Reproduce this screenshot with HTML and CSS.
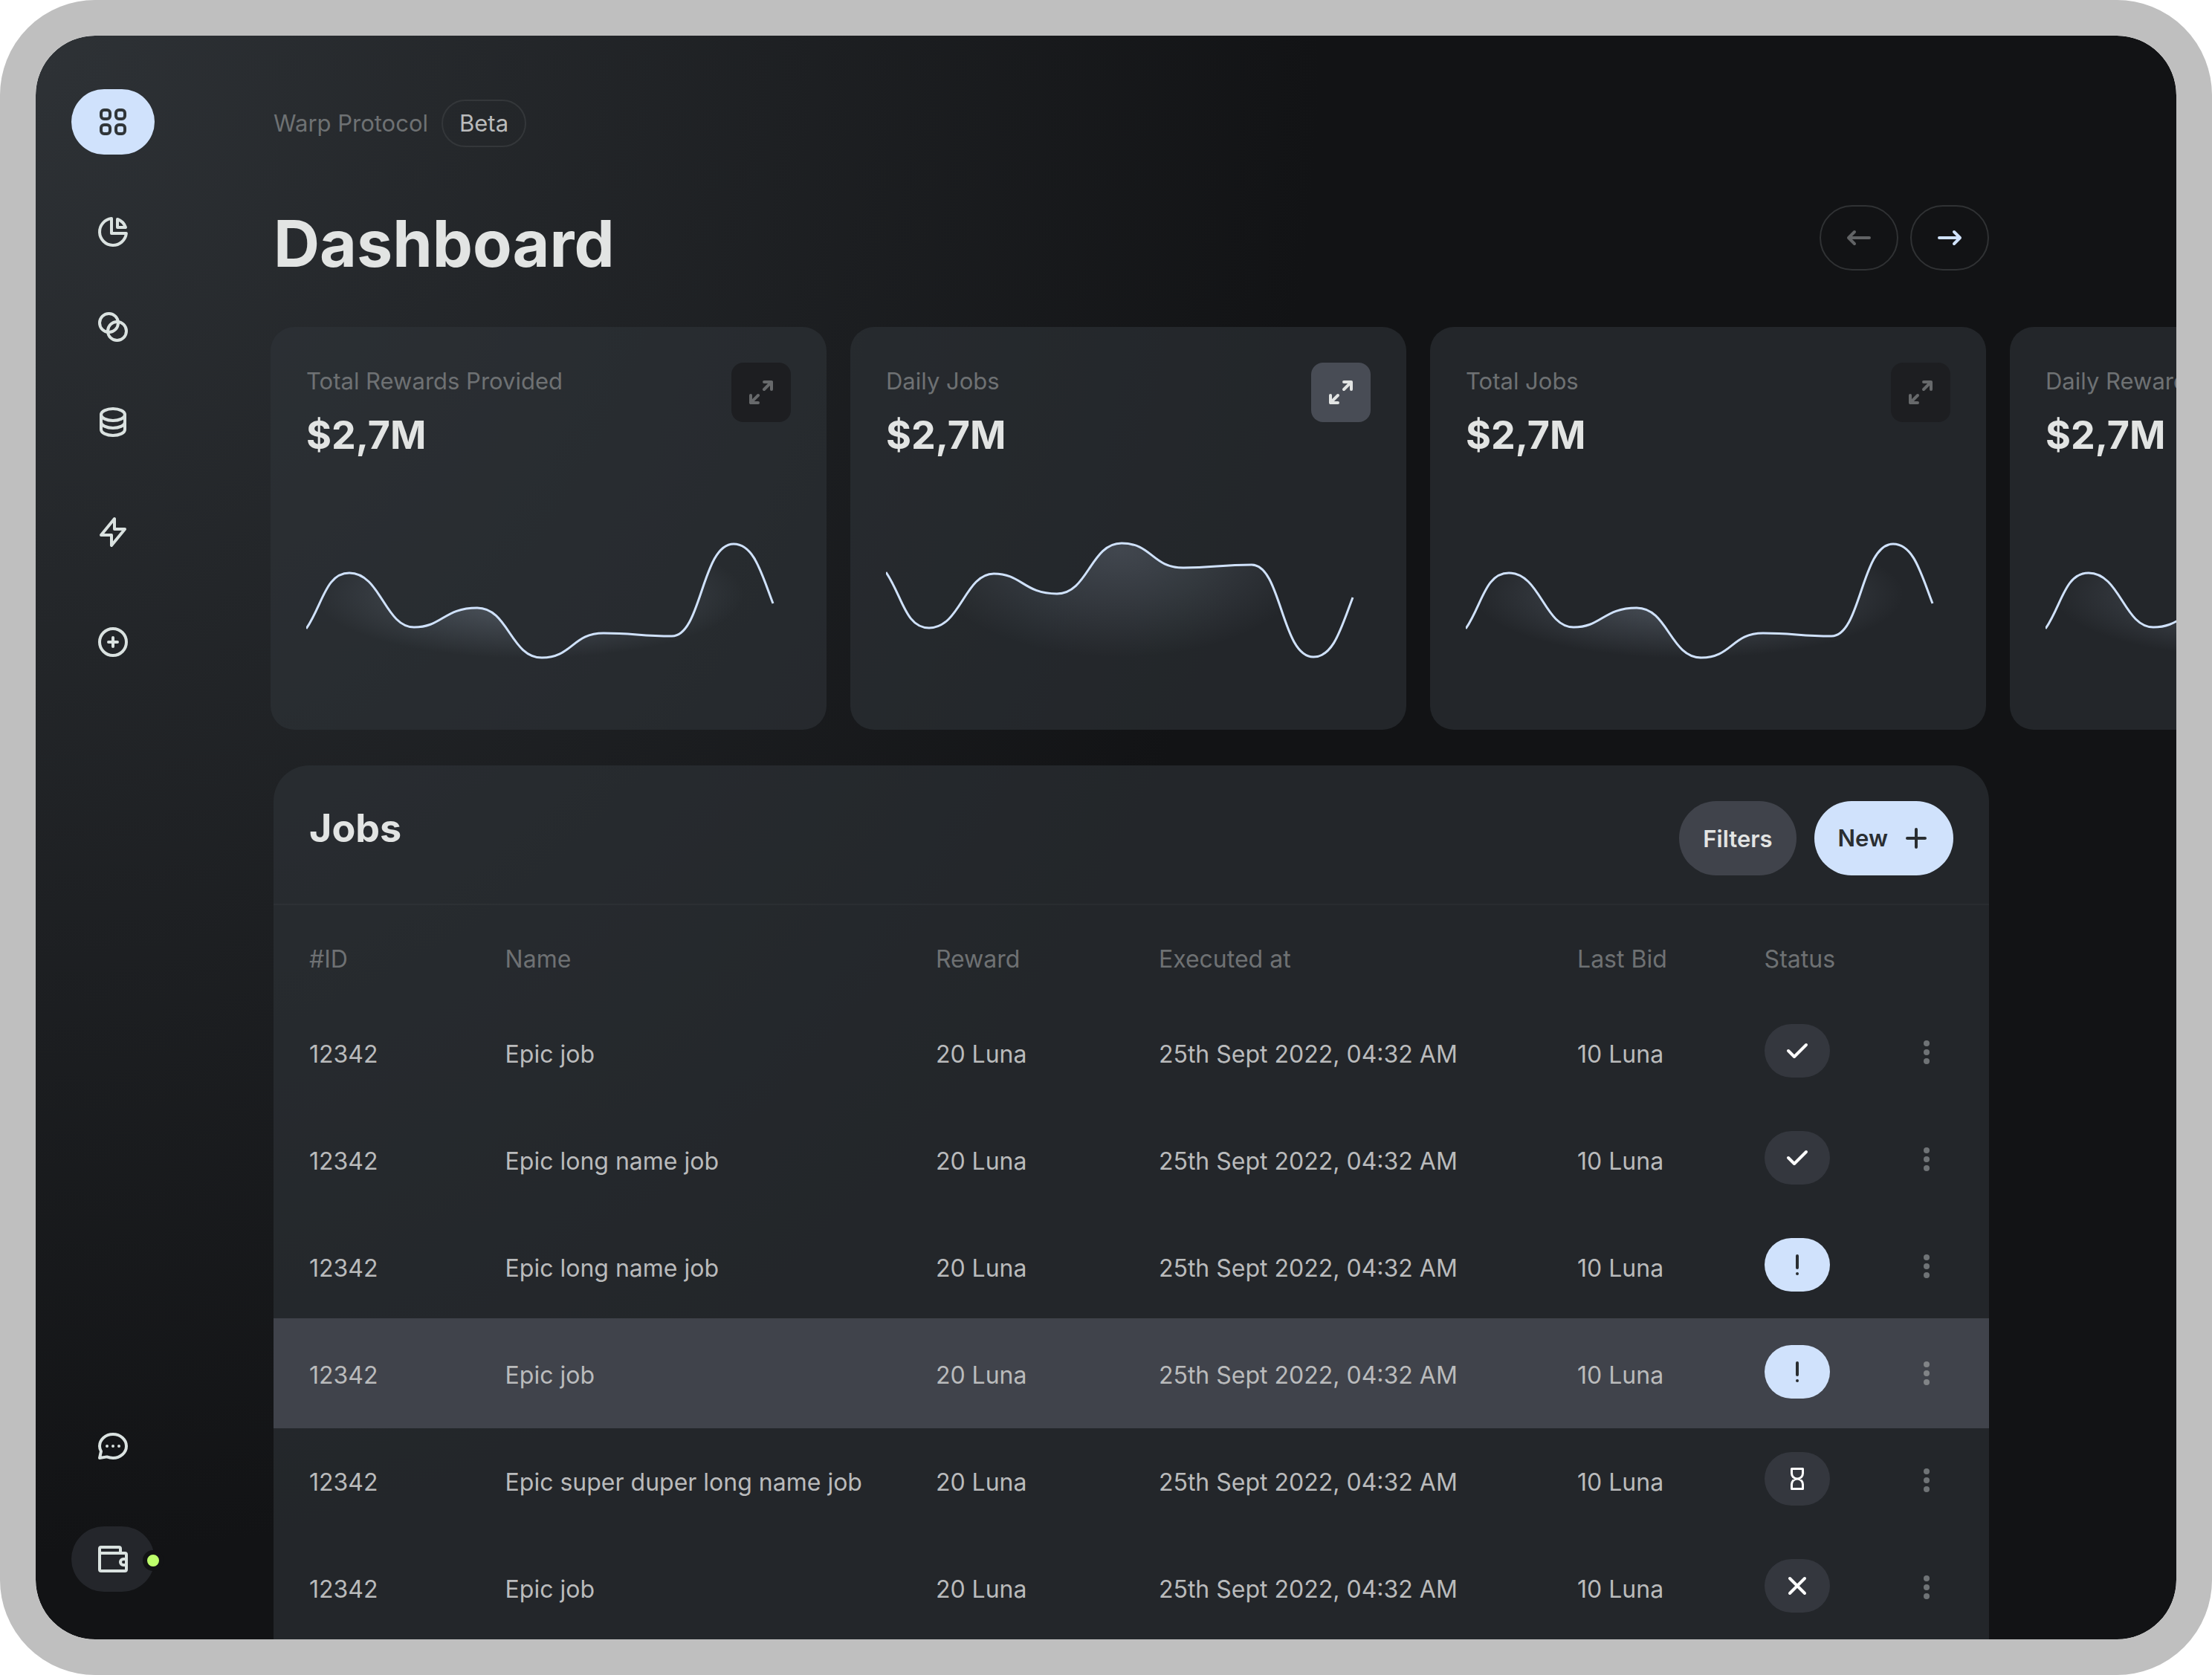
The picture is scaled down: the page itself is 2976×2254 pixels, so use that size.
FILE: index.html
```
<!DOCTYPE html>
<html lang="en">
<head>
<meta charset="utf-8">
<title>Warp Protocol – Dashboard</title>
<meta name="viewport" content="width=device-width, initial-scale=1">
<link rel="stylesheet" href="styles.css">
</head>
<body>
<svg class="sprite" aria-hidden="true">
  <defs>
    <radialGradient id="glow-rise" gradientUnits="userSpaceOnUse" cx="0" cy="0" r="1" gradientTransform="translate(300 80) scale(290 86)">
      <stop offset="0" stop-color="#d0e2fc" stop-opacity=".26"/>
      <stop offset="1" stop-color="#d0e2fc" stop-opacity="0"/>
    </radialGradient>
    <radialGradient id="glow-fall" gradientUnits="userSpaceOnUse" cx="0" cy="0" r="1" gradientTransform="translate(314 20) scale(270 145)">
      <stop offset="0" stop-color="#d0e2fc" stop-opacity=".17"/>
      <stop offset=".5" stop-color="#d0e2fc" stop-opacity=".09"/>
      <stop offset="1" stop-color="#d0e2fc" stop-opacity="0"/>
    </radialGradient>
    <symbol id="i-grid" viewBox="0 0 24 24"><rect x="4" y="4" width="6" height="6" rx="2"/><rect x="14" y="4" width="6" height="6" rx="2"/><rect x="4" y="14" width="6" height="6" rx="2"/><rect x="14" y="14" width="6" height="6" rx="2"/></symbol>
    <symbol id="i-pie" viewBox="0 0 24 24"><path d="M11 3.05A9 9 0 1 0 20.95 13H11z"/><path d="M15 3.5A9 9 0 0 1 20.5 9H15z"/></symbol>
    <symbol id="i-rings" viewBox="0 0 24 24"><circle cx="9.25" cy="9.25" r="6.25"/><circle cx="14.75" cy="14.75" r="6.25"/></symbol>
    <symbol id="i-data" viewBox="0 0 24 24"><ellipse cx="12" cy="7" rx="8" ry="4"/><path d="M4 7v10c0 2.2 3.6 4 8 4s8-1.8 8-4V7M4 12c0 2.2 3.6 4 8 4s8-1.8 8-4"/></symbol>
    <symbol id="i-bolt" viewBox="0 0 24 24"><path d="M13 3v7h7L11 21v-7H4z"/></symbol>
    <symbol id="i-add" viewBox="0 0 24 24"><circle cx="12" cy="12" r="9"/><path d="M12 9v6M9 12h6"/></symbol>
    <symbol id="i-chat" viewBox="0 0 24 24"><path d="M3 20l1-4.5C3.4 14.5 3 13.3 3 12c0-4.4 4-8 9-8s9 3.6 9 8-4 8-9 8c-1.5 0-2.8-.3-4.1-.8z"/><path d="M8 12h.01M12 12h.01M16 12h.01"/></symbol>
    <symbol id="i-wallet" viewBox="0 0 24 24"><path d="M3 8V5a1 1 0 0 1 1-1h12a1 1 0 0 1 1 1v3M3 8h17a1 1 0 0 1 1 1v10a1 1 0 0 1-1 1H4a1 1 0 0 1-1-1zM21 12h-2a2 2 0 0 0 0 4h2"/></symbol>
    <symbol id="i-left" viewBox="0 0 24 24"><path d="M19 12H5M9 8l-4 4 4 4"/></symbol>
    <symbol id="i-right" viewBox="0 0 24 24"><path d="M5 12h14M15 8l4 4-4 4"/></symbol>
    <symbol id="i-expand" viewBox="0 0 24 24"><path d="M14 5h5v5M19 5l-5 5M10 19H5v-5M5 19l5-5"/></symbol>
    <symbol id="i-plus" viewBox="0 0 24 24"><path d="M12 6v12M6 12h12"/></symbol>
    <symbol id="i-check" viewBox="0 0 24 24"><path d="M6 12l4 4 8-8"/></symbol>
    <symbol id="i-alert" viewBox="0 0 24 24"><path d="M12 6v8M12 18h.01"/></symbol>
    <symbol id="i-wait" viewBox="0 0 24 24"><path stroke-width="1.5" d="M8.25 5.25h7.5v3c0 2-1.5 3.75-3.75 3.75s-3.75-1.75-3.75-3.75zM12 12c2.25 0 3.75 1.75 3.75 3.75v3h-7.5v-3c0-2 1.5-3.75 3.75-3.75z"/></symbol>
    <symbol id="i-cross" viewBox="0 0 24 24"><path d="M7 7l10 10M17 7L7 17"/></symbol>
    <symbol id="i-more" viewBox="0 0 24 24"><g fill="currentColor" stroke="none"><circle cx="12" cy="7" r="2"/><circle cx="12" cy="13" r="2"/><circle cx="12" cy="19" r="2"/></g></symbol>
    <symbol id="c-rise" viewBox="0 0 652 176">
      <path fill="url(#glow-rise)" d="M0 126C22 94 26 51 58 51C100 51 106 124 145 124C183 124 185 98 230 98C272 98 275 165 317 165C358 165 358 132 400 132C440 132 450 136 492 136C532 136 532 12 575 12C602 12 612 50 628 92V176H0z"/>
      <path d="M0 126C22 94 26 51 58 51C100 51 106 124 145 124C183 124 185 98 230 98C272 98 275 165 317 165C358 165 358 132 400 132C440 132 450 136 492 136C532 136 532 12 575 12C602 12 612 50 628 92" fill="none" stroke="#d0e2fc" stroke-width="3"/>
    </symbol>
    <symbol id="c-fall" viewBox="0 0 652 176">
      <path fill="url(#glow-fall)" d="M0 50C22 82 26 125 58 125C100 125 106 52 145 52C183 52 185 79 230 79C272 79 275 11 317 11C358 11 358 44 400 44C440 44 450 40 492 40C532 40 532 164 575 164C602 164 612 126 628 84V176H0z"/>
      <path d="M0 50C22 82 26 125 58 125C100 125 106 52 145 52C183 52 185 79 230 79C272 79 275 11 317 11C358 11 358 44 400 44C440 44 450 40 492 40C532 40 532 164 575 164C602 164 612 126 628 84" fill="none" stroke="#d0e2fc" stroke-width="3"/>
    </symbol>
  </defs>
</svg>

<div class="app">
  <aside class="sidebar">
    <nav class="nav" aria-label="Main">
      <a class="nav-item nav-item-active" href="#dashboard" aria-label="Dashboard"><svg class="icon"><use href="#i-grid"/></svg></a>
      <div class="nav-group">
        <a class="nav-item" href="#stats" aria-label="Statistics"><svg class="icon"><use href="#i-pie"/></svg></a>
        <a class="nav-item" href="#pairs" aria-label="Pairs"><svg class="icon"><use href="#i-rings"/></svg></a>
        <a class="nav-item" href="#balances" aria-label="Balances"><svg class="icon"><use href="#i-data"/></svg></a>
      </div>
      <a class="nav-item" href="#jobs" aria-label="Jobs"><svg class="icon"><use href="#i-bolt"/></svg></a>
      <a class="nav-item" href="#new" aria-label="Create"><svg class="icon"><use href="#i-add"/></svg></a>
    </nav>
    <div class="nav-bottom">
      <a class="nav-item" href="#support" aria-label="Support"><svg class="icon"><use href="#i-chat"/></svg></a>
      <a class="nav-item nav-item-wallet" href="#wallet" aria-label="Wallet, connected"><svg class="icon"><use href="#i-wallet"/></svg><span class="online"></span></a>
    </div>
  </aside>

  <main class="main">
    <div class="crumb"><span>Warp Protocol</span><span class="tag">Beta</span></div>
    <header class="title-row">
      <h1 class="title">Dashboard</h1>
      <div class="pager">
        <button class="pager-btn pager-btn-off" type="button" aria-label="Previous"><svg class="icon"><use href="#i-left"/></svg></button>
        <button class="pager-btn" type="button" aria-label="Next"><svg class="icon"><use href="#i-right"/></svg></button>
      </div>
    </header>

    <section class="cards" aria-label="Key figures">
      <article class="card">
        <div class="card-head"><div><h2 class="card-label">Total Rewards Provided</h2><p class="card-value">$2,7M</p></div>
          <button class="expand" type="button" aria-label="Expand"><svg class="icon"><use href="#i-expand"/></svg></button></div>
        <svg class="chart" viewBox="0 0 652 176"><use href="#c-rise"/></svg>
      </article>
      <article class="card">
        <div class="card-head"><div><h2 class="card-label">Daily Jobs</h2><p class="card-value">$2,7M</p></div>
          <button class="expand expand-active" type="button" aria-label="Expand"><svg class="icon"><use href="#i-expand"/></svg></button></div>
        <svg class="chart" viewBox="0 0 652 176"><use href="#c-fall"/></svg>
      </article>
      <article class="card">
        <div class="card-head"><div><h2 class="card-label">Total Jobs</h2><p class="card-value">$2,7M</p></div>
          <button class="expand" type="button" aria-label="Expand"><svg class="icon"><use href="#i-expand"/></svg></button></div>
        <svg class="chart" viewBox="0 0 652 176"><use href="#c-rise"/></svg>
      </article>
      <article class="card">
        <div class="card-head"><div><h2 class="card-label">Daily Rewards</h2><p class="card-value">$2,7M</p></div>
          <button class="expand" type="button" aria-label="Expand"><svg class="icon"><use href="#i-expand"/></svg></button></div>
        <svg class="chart" viewBox="0 0 652 176"><use href="#c-rise"/></svg>
      </article>
    </section>

    <section class="panel">
      <header class="panel-head">
        <h2 class="panel-title">Jobs</h2>
        <div class="actions">
          <button class="btn" type="button">Filters</button>
          <button class="btn btn-primary" type="button">New<svg class="icon"><use href="#i-plus"/></svg></button>
        </div>
      </header>
      <table class="jobs">
        <colgroup><col class="col-id"><col class="col-name"><col class="col-reward"><col class="col-time"><col class="col-bid"><col class="col-status"><col class="col-more"></colgroup>
        <thead>
          <tr><th>#ID</th><th>Name</th><th>Reward</th><th>Executed at</th><th>Last Bid</th><th>Status</th><th></th></tr>
        </thead>
        <tbody>
          <tr><td>12342</td><td>Epic job</td><td>20 Luna</td><td>25th Sept 2022, 04:32 AM</td><td>10 Luna</td><td class="cell-icon"><span class="status" role="img" aria-label="Done"><svg class="icon"><use href="#i-check"/></svg></span></td><td class="cell-icon"><button class="more" type="button" aria-label="More"><svg class="icon"><use href="#i-more"/></svg></button></td></tr>
          <tr><td>12342</td><td>Epic long name job</td><td>20 Luna</td><td>25th Sept 2022, 04:32 AM</td><td>10 Luna</td><td class="cell-icon"><span class="status" role="img" aria-label="Done"><svg class="icon"><use href="#i-check"/></svg></span></td><td class="cell-icon"><button class="more" type="button" aria-label="More"><svg class="icon"><use href="#i-more"/></svg></button></td></tr>
          <tr><td>12342</td><td>Epic long name job</td><td>20 Luna</td><td>25th Sept 2022, 04:32 AM</td><td>10 Luna</td><td class="cell-icon"><span class="status status-alert" role="img" aria-label="Attention"><svg class="icon"><use href="#i-alert"/></svg></span></td><td class="cell-icon"><button class="more" type="button" aria-label="More"><svg class="icon"><use href="#i-more"/></svg></button></td></tr>
          <tr class="row-active"><td>12342</td><td>Epic job</td><td>20 Luna</td><td>25th Sept 2022, 04:32 AM</td><td>10 Luna</td><td class="cell-icon"><span class="status status-alert" role="img" aria-label="Attention"><svg class="icon"><use href="#i-alert"/></svg></span></td><td class="cell-icon"><button class="more" type="button" aria-label="More"><svg class="icon"><use href="#i-more"/></svg></button></td></tr>
          <tr><td>12342</td><td>Epic super duper long name job</td><td>20 Luna</td><td>25th Sept 2022, 04:32 AM</td><td>10 Luna</td><td class="cell-icon"><span class="status" role="img" aria-label="Pending"><svg class="icon"><use href="#i-wait"/></svg></span></td><td class="cell-icon"><button class="more" type="button" aria-label="More"><svg class="icon"><use href="#i-more"/></svg></button></td></tr>
          <tr><td>12342</td><td>Epic job</td><td>20 Luna</td><td>25th Sept 2022, 04:32 AM</td><td>10 Luna</td><td class="cell-icon"><span class="status" role="img" aria-label="Failed"><svg class="icon"><use href="#i-cross"/></svg></span></td><td class="cell-icon"><button class="more" type="button" aria-label="More"><svg class="icon"><use href="#i-more"/></svg></button></td></tr>
        </tbody>
      </table>
    </section>
  </main>
</div>
</body>
</html>
```
FILE: styles.css
```
:root {
  --ice: #d0e2fc;
  --ink: #2a2e31;
  --text: #e2e4e3;
  --text-soft: #babbbc;
  --text-dim: #6e7173;
  --surface: rgba(46, 51, 56, .6);
}

* { box-sizing: border-box; }

body {
  margin: 0;
  background: #fff;
  color: var(--text);
  font: 400 32px/48px Inter, "Liberation Sans", sans-serif;
}

h1, h2, p { margin: 0; }

button {
  padding: 0;
  border: 0;
  background: none;
  color: inherit;
  font: inherit;
  cursor: pointer;
}

.sprite { position: absolute; width: 0; height: 0; }

.icon {
  display: block;
  flex: none;
  width: 48px;
  height: 48px;
  fill: none;
  stroke: currentColor;
  stroke-width: 2;
  stroke-linecap: round;
  stroke-linejoin: round;
}

.app {
  display: flex;
  gap: 160px;
  min-height: 100vh;
  overflow: hidden;
  border: 48px solid #bfbfbf;
  border-radius: 128px;
  background: radial-gradient(60% 95% at 0 0, #2e3236, #121315) padding-box;
}

/* Sidebar */

.sidebar {
  display: flex;
  flex: none;
  flex-direction: column;
  justify-content: space-between;
  padding: 72px 0 64px 48px;
}

.nav { display: flex; flex-direction: column; gap: 60px; }
.nav-group { display: flex; flex-direction: column; gap: 40px; }
.nav-bottom { display: flex; flex-direction: column; gap: 64px; }

.nav-item {
  position: relative;
  display: flex;
  align-items: center;
  justify-content: center;
  width: 112px;
  height: 88px;
  border-radius: 44px;
  color: #dae2e0;
}

.nav-item-active { background: var(--ice); color: #303538; }
.nav-item-wallet { background: #24262b; }

.online {
  position: absolute;
  top: 32px;
  right: -12px;
  width: 28px;
  height: 28px;
  border: 6px solid #121315;
  border-radius: 50%;
  background: #bdff6b;
}

/* Page heading */

.main {
  flex: 1;
  min-width: 0;
  padding: 86px 252px 0 0;
}

.crumb {
  display: flex;
  align-items: center;
  gap: 18px;
  color: var(--text-dim);
  font-size: 31px;
}

.tag {
  padding: 6px 22px;
  border: 2px solid #34373a;
  border-radius: 32px;
  color: var(--text-soft);
}

.title-row {
  display: flex;
  align-items: flex-start;
  justify-content: space-between;
  margin-top: 78px;
}

.title { font-size: 86px; line-height: 104px; font-weight: 700; }

.pager { display: flex; gap: 16px; }

.pager-btn {
  display: flex;
  align-items: center;
  justify-content: center;
  width: 106px;
  height: 88px;
  border: 2px solid #303234;
  border-radius: 44px;
  color: var(--ice);
}

.pager-btn-off { color: #616365; }

/* Key figures */

.cards {
  display: flex;
  gap: 32px;
  margin: 60px 4px 48px -4px;
}

.card {
  flex: 0 0 calc((100% - 64px) / 3);
  padding: 48px 48px 86px;
  border-radius: 32px;
  background: var(--surface);
}

.card-head {
  display: flex;
  align-items: flex-start;
  justify-content: space-between;
}

.card-label {
  color: var(--text-dim);
  font-size: 31px;
  line-height: 50px;
  font-weight: 400;
}

.card-value {
  margin-top: 18px;
  font-size: 52px;
  line-height: 60px;
  font-weight: 700;
}

.expand {
  display: flex;
  align-items: center;
  justify-content: center;
  width: 80px;
  height: 80px;
  border-radius: 16px;
  background: #1d1e21;
  color: #67696b;
}

.expand-active { background: #484c55; color: var(--text); }

.chart { display: block; width: 100%; margin-top: 104px; }

/* Jobs */

.panel {
  overflow: hidden;
  border-radius: 48px 48px 0 0;
  background: var(--surface);
}

.panel-head {
  display: flex;
  align-items: flex-start;
  justify-content: space-between;
  padding: 48px 48px 38px;
  border-bottom: 2px solid rgba(255, 255, 255, .03);
}

.panel-title { font-size: 52px; line-height: 74px; font-weight: 700; }

.actions { display: flex; gap: 24px; }

.btn {
  display: flex;
  align-items: center;
  gap: 14px;
  height: 100px;
  padding: 2px 32px 0;
  border-radius: 50px;
  background: #40434b;
  color: var(--text);
  font-size: 31px;
  font-weight: 600;
}

.btn-primary { padding: 0 26px 0 32px; background: var(--ice); color: var(--ink); }

.jobs {
  width: 100%;
  border-collapse: collapse;
  table-layout: fixed;
}

.col-id { width: 13.5%; }
.col-name { width: 25.1%; }
.col-reward { width: 13%; }
.col-time { width: 24.4%; }
.col-bid { width: 10.9%; }
.col-status { width: 7.9%; }
.col-more { width: 5.2%; }

.jobs th {
  height: 124px;
  padding: 22px 0 0;
  color: var(--text-dim);
  font-weight: 400;
  text-align: left;
}

.jobs td {
  height: 144px;
  padding: 10px 0 0;
  color: var(--text-soft);
  white-space: nowrap;
}

.jobs th:first-child,
.jobs td:first-child { padding-left: 48px; }

.jobs .cell-icon { padding: 0; }

.row-active { background: #40434b; box-shadow: 0 4px 0 #40434b; }

.status {
  display: flex;
  align-items: center;
  justify-content: center;
  width: 88px;
  height: 72px;
  border-radius: 36px;
  background: #34373e;
  color: #fff;
}

.status-alert { background: var(--ice); color: var(--ink); }

.more {
  display: flex;
  align-items: center;
  justify-content: center;
  width: 72px;
  height: 72px;
  color: #6f7376;
}

.row-active .more { color: #818487; }
```
